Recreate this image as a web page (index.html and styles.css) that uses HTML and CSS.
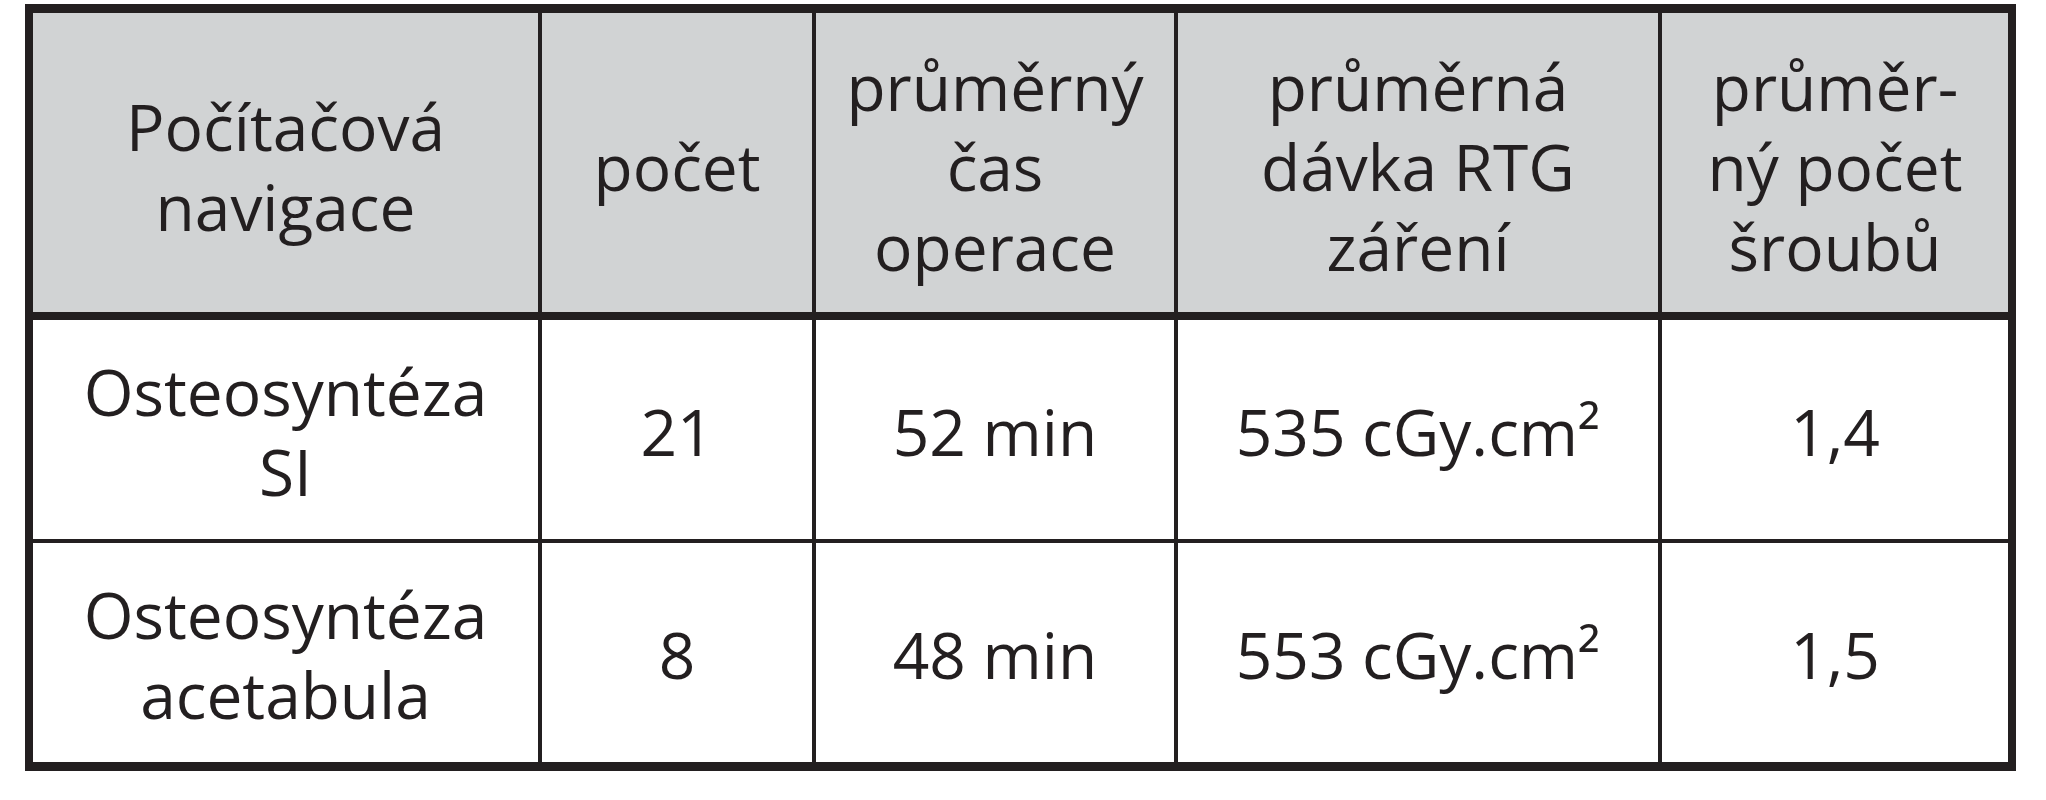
FILE: index.html
```html
<!DOCTYPE html>
<html lang="cs">
<head>
<meta charset="utf-8">
<title>Počítačová navigace</title>
<link rel="stylesheet" href="styles.css">
</head>
<body>
<div class="table">
  <div class="cell head">Počítačová<br>navigace</div>
  <div class="cell head">počet</div>
  <div class="cell head">průměrný<br>čas<br>operace</div>
  <div class="cell head">průměrná<br>dávka RTG<br>záření</div>
  <div class="cell head">průměr-<br>ný počet<br>šroubů</div>

  <div class="cell">Osteosyntéza<br>SI</div>
  <div class="cell">21</div>
  <div class="cell">52 min</div>
  <div class="cell">535 cGy.cm²</div>
  <div class="cell">1,4</div>

  <div class="cell">Osteosyntéza<br>acetabula</div>
  <div class="cell">8</div>
  <div class="cell">48 min</div>
  <div class="cell">553 cGy.cm²</div>
  <div class="cell">1,5</div>
</div>
</body>
</html>
```

FILE: styles.css
```css
html, body {
  margin: 0;
  padding: 0;
  background: #ffffff;
}

body {
  font-family: "Open Sans", "Noto Sans", sans-serif;
  color: #231f20;
}

.table {
  display: grid;
  width: max-content;
  margin: 4px 0 0 25px;
  grid-template-columns: 505px 270px 358px 480px 346px;
  grid-template-rows: 303px 219px 219px;
  column-gap: 4px;
  row-gap: 4px;
  background: #231f20;
  border-style: solid;
  border-color: #231f20;
  border-width: 9px 8px 9px 8px;
}

.cell {
  display: flex;
  align-items: center;
  justify-content: center;
  text-align: center;
  background: #ffffff;
  font-size: 64px;
  line-height: 80px;
  padding-top: 4px;
  box-sizing: border-box;
}

.cell.head {
  background: #d1d3d4;
  margin-bottom: 4px;
  padding-top: 8px;
}
```
